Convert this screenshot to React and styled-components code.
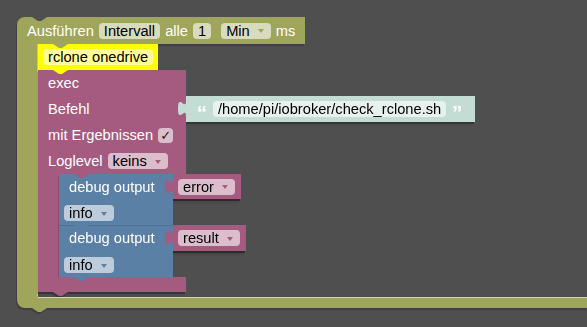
import styled, { createGlobalStyle, css } from "styled-components";

const C = {
  bg: "#4f4f4f",
  olive: "#9fa55b",
  pink: "#a55b80",
  blue: "#5b80a5",
  yellow: "#ffff00",
  text: "#c3ddd4",
};

const GlobalStyle = createGlobalStyle`
  html, body {
    margin: 0;
    padding: 0;
    background: ${C.bg};
    overflow: hidden;
  }
  body {
    font-family: "Liberation Sans", Arial, sans-serif;
    font-size: 14.67px;
  }
`;

// notch cut into the top edge, coloured like whatever sits above
const notch = css`
  &::before {
    content: "";
    position: absolute;
    top: 0;
    left: ${p => (p.$notchLeft ?? 15)}px;
    width: 15px;
    height: 4px;
    background: ${p => p.$notch};
    clip-path: polygon(0 0, 40% 100%, 60% 100%, 100% 0);
  }
`;

const Workspace = styled.div`
  padding: 17px 0 0 17px;
  height: 327px;
  box-sizing: border-box;
`;

const Block = styled.div`
  position: relative;
  display: flex;
  flex-direction: column;
  align-items: flex-start;
  filter: drop-shadow(-1px 2px 0 rgba(0, 0, 0, 0.18));
`;

const Head = styled.div`
  position: relative;
  display: flex;
  align-items: center;
  height: 27px;
  padding: 0 5px;
  background: ${C.olive};
  border-top-left-radius: 8px;
  ${p => p.$notch && notch}
`;

const Row = styled.div`
  display: flex;
  align-items: flex-start;
`;

const Cell = styled.div`
  position: relative;
  display: flex;
  align-items: ${p => (p.$low ? "flex-end" : "center")};
  box-sizing: border-box;
  width: ${p => (p.$w ? `${p.$w}px` : "auto")};
  height: ${p => p.$h || 26}px;
  padding: ${p => (p.$low ? "0 5px 4px" : "0 5px")};
  background: ${p => p.$color};
  box-shadow: ${p => (p.$seam ? "inset 0 1px 0 rgba(0,0,0,0.12)" : "none")};
  ${p => p.$notch && notch}
`;

const Label = styled.span`
  padding: 0 5px;
  color: #fff;
  white-space: nowrap;
  margin-left: ${p => p.$space || 0}px;
`;

const Field = styled.span`
  display: inline-flex;
  align-items: center;
  height: 16px;
  padding: 0 5px;
  margin-left: ${p => p.$space || 0}px;
  border-radius: 4px;
  background: rgba(255, 255, 255, 0.6);
  color: #000;
  white-space: nowrap;
`;

const Arrow = styled.span`
  display: inline-block;
  width: 0;
  height: 0;
  margin: 1px 2px 0 8px;
  border-left: 3.5px solid transparent;
  border-right: 3.5px solid transparent;
  border-top: 4px solid ${p => p.$color};
`;

const Check = styled.span`
  display: inline-flex;
  align-items: center;
  justify-content: center;
  width: 15px;
  height: 15px;
  border-radius: 4px;
  background: rgba(255, 255, 255, 0.6);
  color: #1a1a2a;
  font-family: "DejaVu Sans", sans-serif;
  font-size: 13px;
`;

const ValueBlock = styled.div`
  position: relative;
  display: flex;
  align-items: center;
  gap: ${p => p.$gap || 0}px;
  height: ${p => p.$h || 26}px;
  padding: ${p => p.$pad || "0 6px 0 5px"};
  background: ${p => p.$color};
  &::before {
    content: "";
    position: absolute;
    left: -8px;
    top: 5px;
    width: 8px;
    height: 15px;
    background: ${p => p.$color};
    clip-path: path("M 8 0 C 8 10 0 -8 0 7.5 C 0 23 8 5 8 15 Z");
  }
`;

const Quote = styled.span`
  display: block;
  width: 12px;
  height: 26px;
  line-height: 34px;
  text-align: center;
  color: #fff;
  font-family: "Liberation Sans", Arial, sans-serif;
  font-weight: bold;
  font-size: 21px;
`;

const Mouth = styled.div`
  display: flex;
  align-items: stretch;
`;

const Arm = styled.div`
  width: ${p => p.$w}px;
  flex: none;
  background: ${p => p.$color};
  box-shadow: ${p => (p.$lit ? "inset -1px 0 0 rgba(255,255,255,0.35)" : "none")};
`;

const Stack = styled.div`
  display: flex;
  flex-direction: column;
  align-items: flex-start;
  padding-bottom: ${p => p.$pad || 0}px;
`;

const Foot = styled.div`
  position: relative;
  align-self: ${p => (p.$w ? "flex-start" : "stretch")};
  width: ${p => (p.$w ? `${p.$w}px` : "auto")};
  height: ${p => p.$h}px;
  background: ${p =>
    p.$lit
      ? `linear-gradient(to right, ${p.$color} 21px, rgba(255,255,255,0.55) 21px) top / 100% 1px no-repeat, ${p.$color}`
      : p.$color};
  border-bottom-left-radius: ${p => (p.$round ? 8 : 0)}px;
  ${p => p.$notch && notch}
  &::after {
    content: "";
    position: absolute;
    bottom: -4px;
    left: 15px;
    width: 15px;
    height: 4px;
    background: ${p => p.$color};
    clip-path: polygon(0 0, 40% 100%, 60% 100%, 100% 0);
  }
`;

const Dropdown = ({ color, space, children }) => (
  <Field $space={space}>
    {children}
    <Arrow $color={color} />
  </Field>
);

const DebugBlock = ({ level, above, top, seam }) => (
  <Block>
    <Row>
      <Cell $color={C.blue} $w={114} $h={top} $notch={above} $seam={seam}>
        <Label>debug output</Label>
      </Cell>
      <ValueBlock $color={C.pink} $h={top}>
        <Dropdown color={C.pink}>{level}</Dropdown>
      </ValueBlock>
    </Row>
    <Cell $color={C.blue} $w={114} $h={26} $low>
      <Dropdown color={C.blue}>info</Dropdown>
    </Cell>
  </Block>
);

const ExecBlock = () => (
  <Block>
    <Cell $color={C.pink} $w={148} $notch={C.yellow}>
      <Label>exec</Label>
    </Cell>
    <Row>
      <Cell $color={C.pink} $w={148}>
        <Label>Befehl</Label>
      </Cell>
      <ValueBlock $color={C.text} $h={26} $gap={5} $pad="0 12px 0 10px">
        <Quote>“</Quote>
        <Field>/home/pi/iobroker/check_rclone.sh</Field>
        <Quote>”</Quote>
      </ValueBlock>
    </Row>
    <Cell $color={C.pink} $w={148}>
      <Label>mit Ergebnissen</Label>
      <Check>✓</Check>
    </Cell>
    <Cell $color={C.pink} $w={148}>
      <Label>Loglevel</Label>
      <Dropdown color={C.pink}>keins</Dropdown>
    </Cell>
    <Mouth>
      <Arm $color={C.pink} $w={21} />
      <Stack>
        <DebugBlock level="error" above={C.pink} top={25} />
        <DebugBlock level="result" above={C.blue} top={26} seam />
      </Stack>
    </Mouth>
    <Foot $color={C.pink} $w={148} $h={15} $notch={C.blue} $notchLeft={36} />
  </Block>
);

export default function App() {
  return (
    <>
      <GlobalStyle />
      <Workspace>
        <Block>
          <Head $notch={C.bg}>
            <Label>Ausführen</Label>
            <Field>Intervall</Field>
            <Label>alle</Label>
            <Field>1</Field>
            <Dropdown color={C.olive} space={10}>Min</Dropdown>
            <Label>ms</Label>
          </Head>
          <Mouth>
            <Arm $color={C.olive} $w={21} $lit />
            <Stack $pad={5}>
              <Cell $color={C.yellow} $notch={C.olive}>
                <Field>rclone onedrive</Field>
              </Cell>
              <ExecBlock />
            </Stack>
          </Mouth>
          <Foot $color={C.olive} $h={11} $round $lit />
        </Block>
      </Workspace>
    </>
  );
}
